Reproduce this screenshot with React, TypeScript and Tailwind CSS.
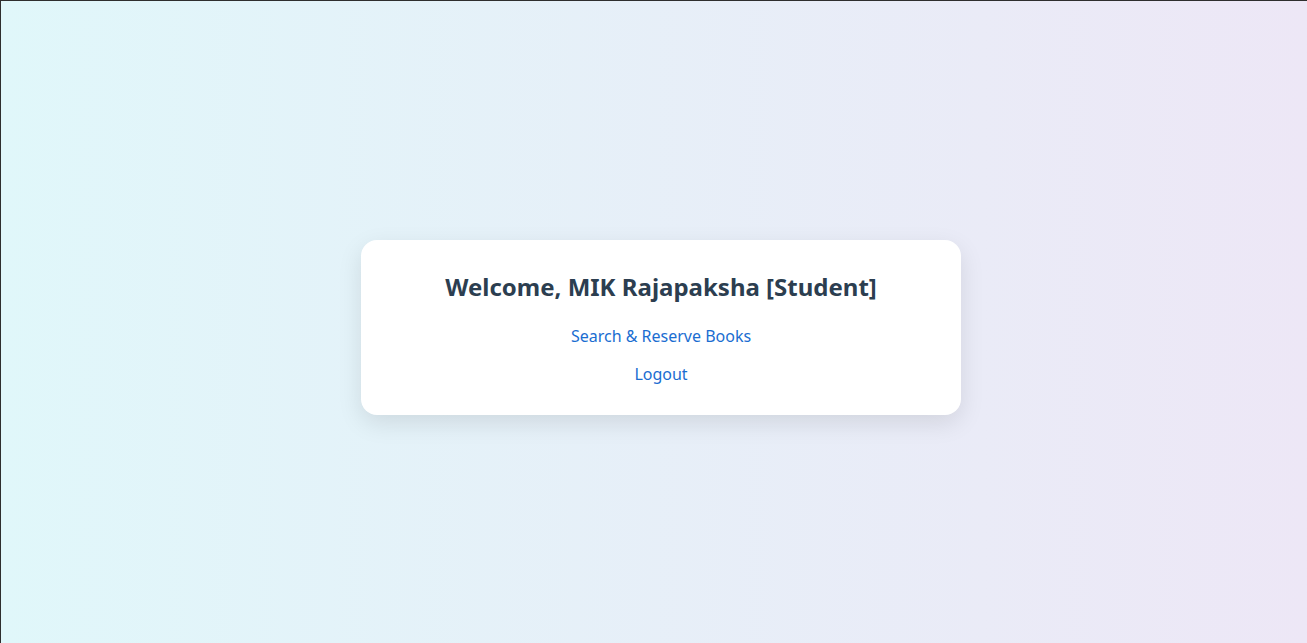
export default function App() {
  return (
    <div
      className="min-h-screen w-full flex items-center justify-center pl-[14px] pt-[11px] border-t border-l border-[#2e2e2e] bg-gradient-to-r from-[#e0f7fa] to-[#ede7f6]"
      style={{ fontFamily: '"Noto Sans", sans-serif' }}
    >
      <div className="w-[600px] bg-white rounded-2xl pt-[31px] pb-[29px] px-8 text-center shadow-[0_8px_24px_rgba(0,0,0,0.1)]">
        <h2 className="text-2xl font-bold text-[#2c3e50] mb-[21px]">
          Welcome, MIK Rajapaksha [Student]
        </h2>
        <div className="flex flex-col items-center gap-[14px]">
          <a href="#" className="text-base text-[#1a6dd1]">
            Search &amp; Reserve Books
          </a>
          <a href="#" className="text-base text-[#1a6dd1]">
            Logout
          </a>
        </div>
      </div>
    </div>
  );
}
